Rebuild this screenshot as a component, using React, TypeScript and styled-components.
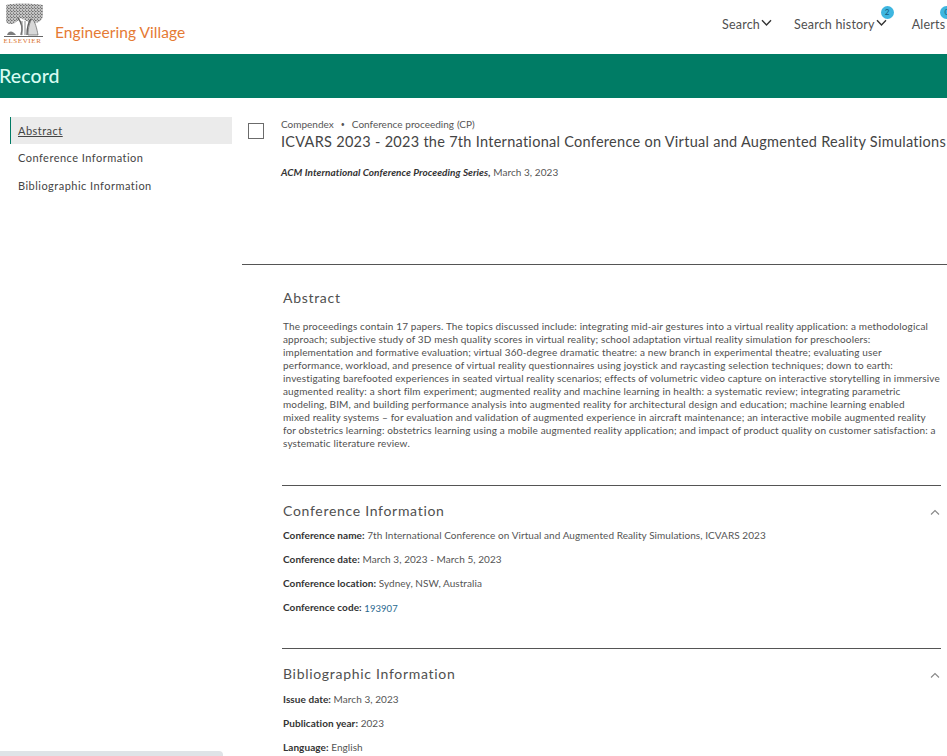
import React from "react";
import styled, { createGlobalStyle } from "styled-components";

const Global = createGlobalStyle`
  html, body { margin: 0; padding: 0; height: 756px; overflow: hidden; background: #fff; }
  body { font-family: "Lato", "Noto Sans", sans-serif; color: #505050; }
  * { box-sizing: border-box; }
`;

const Page = styled.div`
  width: 947px;
  height: 756px;
  overflow: hidden;
  position: relative;
`;

const Header = styled.header`
  height: 54px;
  display: flex;
  justify-content: space-between;
  align-items: flex-start;
  white-space: nowrap;
`;

const Brand = styled.div`
  display: flex;
  align-items: flex-end;
  gap: 12px;
  padding-left: 2px;
  height: 45px;
`;

const LogoBox = styled.div`
  width: 41px;
  display: flex;
  flex-direction: column;
  align-items: center;
`;

const LogoWord = styled.span`
  font-family: "Liberation Serif", serif;
  font-size: 7px;
  line-height: 7px;
  letter-spacing: 0.6px;
  color: #d9732f;
`;

const BrandName = styled.span`
  font-size: 15.5px;
  line-height: 20px;
  color: #e57a34;
  margin-bottom: 3px;
  letter-spacing: 0.07px;
`;

const Nav = styled.nav`
  display: flex;
  width: 225px;
  flex-shrink: 0;
  padding-top: 16px;
  overflow: hidden;
`;

const NavItem = styled.div<{ $gap: number }>`
  position: relative;
  display: flex;
  align-items: flex-start;
  gap: 1px;
  margin-right: ${(p) => p.$gap}px;
  font-size: 12.5px;
  line-height: 17px;
  color: #505050;
  letter-spacing: 0.2px;
`;

const Badge = styled.span<{ $right: number }>`
  position: absolute;
  top: -10px;
  right: ${(p) => p.$right}px;
  width: 13px;
  height: 13px;
  border-radius: 50%;
  background: #3eb6e0;
  color: #14597a;
  font-size: 8px;
  line-height: 13px;
  text-align: center;
`;

const Band = styled.div`
  height: 44px;
  background: #007c65;
  color: #d8fbf2;
  font-size: 19.5px;
  font-weight: 500;
  line-height: 44px;
  text-indent: -1px;
  letter-spacing: 0.1px;
`;

const Body = styled.div`
  display: flex;
  padding-left: 10px;
`;

const Side = styled.aside`
  width: 222px;
  flex-shrink: 0;
  padding-top: 19px;
  margin-right: 10px;
`;

const SideItem = styled.a<{ $active?: boolean }>`
  display: block;
  height: 27px;
  margin-bottom: ${(p) => (p.$active ? "0" : "1px")};
  padding-left: ${(p) => (p.$active ? "7px" : "8px")};
  border-left: ${(p) => (p.$active ? "1px solid #007c65" : "0")};
  background: ${(p) => (p.$active ? "#ebebeb" : "transparent")};
  font-size: 11px;
  line-height: 28px;
  letter-spacing: 0.48px;
  color: #444;
  span { text-decoration: ${(p) => (p.$active ? "underline" : "none")}; }
`;

const Main = styled.main`
  flex: 1;
  min-width: 0;
`;

const Top = styled.section`
  height: 167px;
  display: flex;
  align-items: flex-start;
  padding: 20px 0 0 6px;
  border-bottom: 1px solid #555;
`;

const Check = styled.div`
  width: 16px;
  height: 16px;
  margin-top: 5px;
  margin-right: 17px;
  border: 1.5px solid #6b6b6b;
  flex-shrink: 0;
`;

const TopText = styled.div`
  white-space: nowrap;
`;

const Kicker = styled.div`
  font-size: 10px;
  line-height: 13px;
  color: #555;
  word-spacing: 0.3px;
  b { font-weight: 400; font-size: 7px; margin: 0 7px; vertical-align: 1px; }
`;

const Title = styled.h1`
  margin: 1px 0 0;
  font-size: 14.5px;
  font-weight: 400;
  line-height: 20px;
  color: #444;
  letter-spacing: 0.28px;
`;

const Source = styled.div`
  margin-top: 13px;
  font-size: 10px;
  line-height: 14px;
  color: #555;
  letter-spacing: 0.06px;
  em { font-weight: 700; color: #333; }
`;

const Section = styled.section<{ $rule?: boolean; $pad: number; $height?: number }>`
  margin-left: 40px;
  margin-right: 6px;
  padding-left: 1px;
  padding-top: ${(p) => p.$pad}px;
  height: ${(p) => (p.$height ? `${p.$height}px` : "auto")};
  position: relative;
  ${(p) => (p.$rule ? "border-top: 1px solid #555;" : "")}
`;

const SectionTitle = styled.h2`
  margin: 0;
  font-size: 14px;
  font-weight: 400;
  line-height: 20px;
  color: #505050;
  letter-spacing: 0.7px;
`;

const Paragraph = styled.p`
  margin: 12px 0 0;
  white-space: nowrap;
  font-size: 10px;
  line-height: 13px;
  color: #505050;
  letter-spacing: 0.14px;
`;

const Fields = styled.div<{ $top: number }>`
  margin-top: ${(p) => p.$top}px;
`;

const Field = styled.div`
  font-size: 10px;
  line-height: 14px;
  color: #555;
  margin-bottom: 10px;
  white-space: nowrap;
  letter-spacing: 0.06px;
  b { font-weight: 700; color: #333; }
  a { color: #2a6a8f; font-size: 9.5px; position: relative; top: 1px; }
`;

const Caret = styled.svg`
  position: absolute;
  right: 1px;
  top: 23px;
  width: 10px;
  height: 7px;
`;

const Scrollbar = styled.div`
  position: absolute;
  left: 0;
  bottom: 0;
  width: 223px;
  height: 5px;
  border-radius: 0 4px 0 0;
  background: #dfe3e7;
`;

const ChevronIcon = styled.svg`
  margin-top: 3px;
`;

const Chevron = () => (
  <ChevronIcon width="11" height="8" viewBox="0 0 11 8">
    <path d="M1 1.2 L5.5 6 L10 1.2" fill="none" stroke="#333" strokeWidth="1.4" />
  </ChevronIcon>
);

const Tree = () => (
  <svg width="41" height="36" viewBox="0 0 41 36">
    <defs>
      <pattern id="leaf" width="3" height="3" patternUnits="userSpaceOnUse">
        <rect width="3" height="3" fill="#c4c4c4" />
        <rect x="0" y="0" width="1.5" height="1" fill="#6e6e6e" />
        <rect x="2" y="1.5" width="1" height="1.5" fill="#7c7c7c" />
      </pattern>
    </defs>
    <path d="M4 3 C10 1 30 1 41 3 L41 14 C40 20 34 22 29 21 L18 16 C14 22 8 24 4 20 Z" fill="url(#leaf)" />
    <path d="M19 33 C21 27 20 21 16 16 M25 33 C25 26 26 21 29 17" fill="none" stroke="#5f5f5f" strokeWidth="1.4" />
    <path d="M20 33 V19 M23 33 V19" fill="none" stroke="#8a8a8a" strokeWidth="1" />
    <path d="M26 33 C26 26 28 19 30 17 C33 19 35 27 36 33 Z" fill="#d8d8d8" stroke="#666" strokeWidth="0.7" />
    <path d="M5 33 C7 28 11 29 14 33 Z" fill="#7d7d7d" />
    <path d="M2 34.5 H41" stroke="#555" strokeWidth="0.9" />
  </svg>
);

const abstract = [
  "The proceedings contain 17 papers. The topics discussed include: integrating mid-air gestures into a virtual reality application: a methodological",
  "approach; subjective study of 3D mesh quality scores in virtual reality; school adaptation virtual reality simulation for preschoolers:",
  "implementation and formative evaluation; virtual 360-degree dramatic theatre: a new branch in experimental theatre; evaluating user",
  "performance, workload, and presence of virtual reality questionnaires using joystick and raycasting selection techniques; down to earth:",
  "investigating barefooted experiences in seated virtual reality scenarios; effects of volumetric video capture on interactive storytelling in immersive",
  "augmented reality: a short film experiment; augmented reality and machine learning in health: a systematic review; integrating parametric",
  "modeling, BIM, and building performance analysis into augmented reality for architectural design and education; machine learning enabled",
  "mixed reality systems – for evaluation and validation of augmented experience in aircraft maintenance; an interactive mobile augmented reality",
  "for obstetrics learning: obstetrics learning using a mobile augmented reality application; and impact of product quality on customer satisfaction: a",
  "systematic literature review.",
];

const CaretUp = () => (
  <Caret viewBox="0 0 10 7">
    <path d="M1 5.5 L5 1.5 L9 5.5" fill="none" stroke="#888" strokeWidth="1.1" />
  </Caret>
);

export default function App() {
  return (
    <Page>
      <Global />
      <Header>
        <Brand>
          <LogoBox>
            <Tree />
            <LogoWord>ELSEVIER</LogoWord>
          </LogoBox>
          <BrandName>Engineering Village</BrandName>
        </Brand>
        <Nav>
          <NavItem $gap={22}>Search<Chevron /></NavItem>
          <NavItem $gap={25}>Search history<Chevron /><Badge $right={-7}>2</Badge></NavItem>
          <NavItem $gap={0}>Alerts<Badge $right={-8}>0</Badge></NavItem>
        </Nav>
      </Header>
      <Band>Record</Band>
      <Body>
        <Side>
          <SideItem $active><span>Abstract</span></SideItem>
          <SideItem><span>Conference Information</span></SideItem>
          <SideItem><span>Bibliographic Information</span></SideItem>
        </Side>
        <Main>
          <Top>
            <Check />
            <TopText>
              <Kicker>Compendex<b>•</b>Conference proceeding (CP)</Kicker>
              <Title>ICVARS 2023 - 2023 the 7th International Conference on Virtual and Augmented Reality Simulations</Title>
              <Source><em>ACM International Conference Proceeding Series,</em> March 3, 2023</Source>
            </TopText>
          </Top>
          <Section $pad={23} $height={220}>
            <SectionTitle>Abstract</SectionTitle>
            <Paragraph>
              {abstract.map((l) => (
                <React.Fragment key={l}>{l}<br /></React.Fragment>
              ))}
            </Paragraph>
          </Section>
          <Section $rule $pad={15} $height={163}>
            <SectionTitle>Conference Information</SectionTitle>
            <CaretUp />
            <Fields $top={7}>
              <Field><b>Conference name:</b> 7th International Conference on Virtual and Augmented Reality Simulations, ICVARS 2023</Field>
              <Field><b>Conference date:</b> March 3, 2023 - March 5, 2023</Field>
              <Field><b>Conference location:</b> Sydney, NSW, Australia</Field>
              <Field><b>Conference code:</b> <a>193907</a></Field>
            </Fields>
          </Section>
          <Section $rule $pad={15}>
            <SectionTitle>Bibliographic Information</SectionTitle>
            <CaretUp />
            <Fields $top={8}>
              <Field><b>Issue date:</b> March 3, 2023</Field>
              <Field><b>Publication year:</b> 2023</Field>
              <Field><b>Language:</b> English</Field>
            </Fields>
          </Section>
        </Main>
      </Body>
      <Scrollbar />
    </Page>
  );
}
